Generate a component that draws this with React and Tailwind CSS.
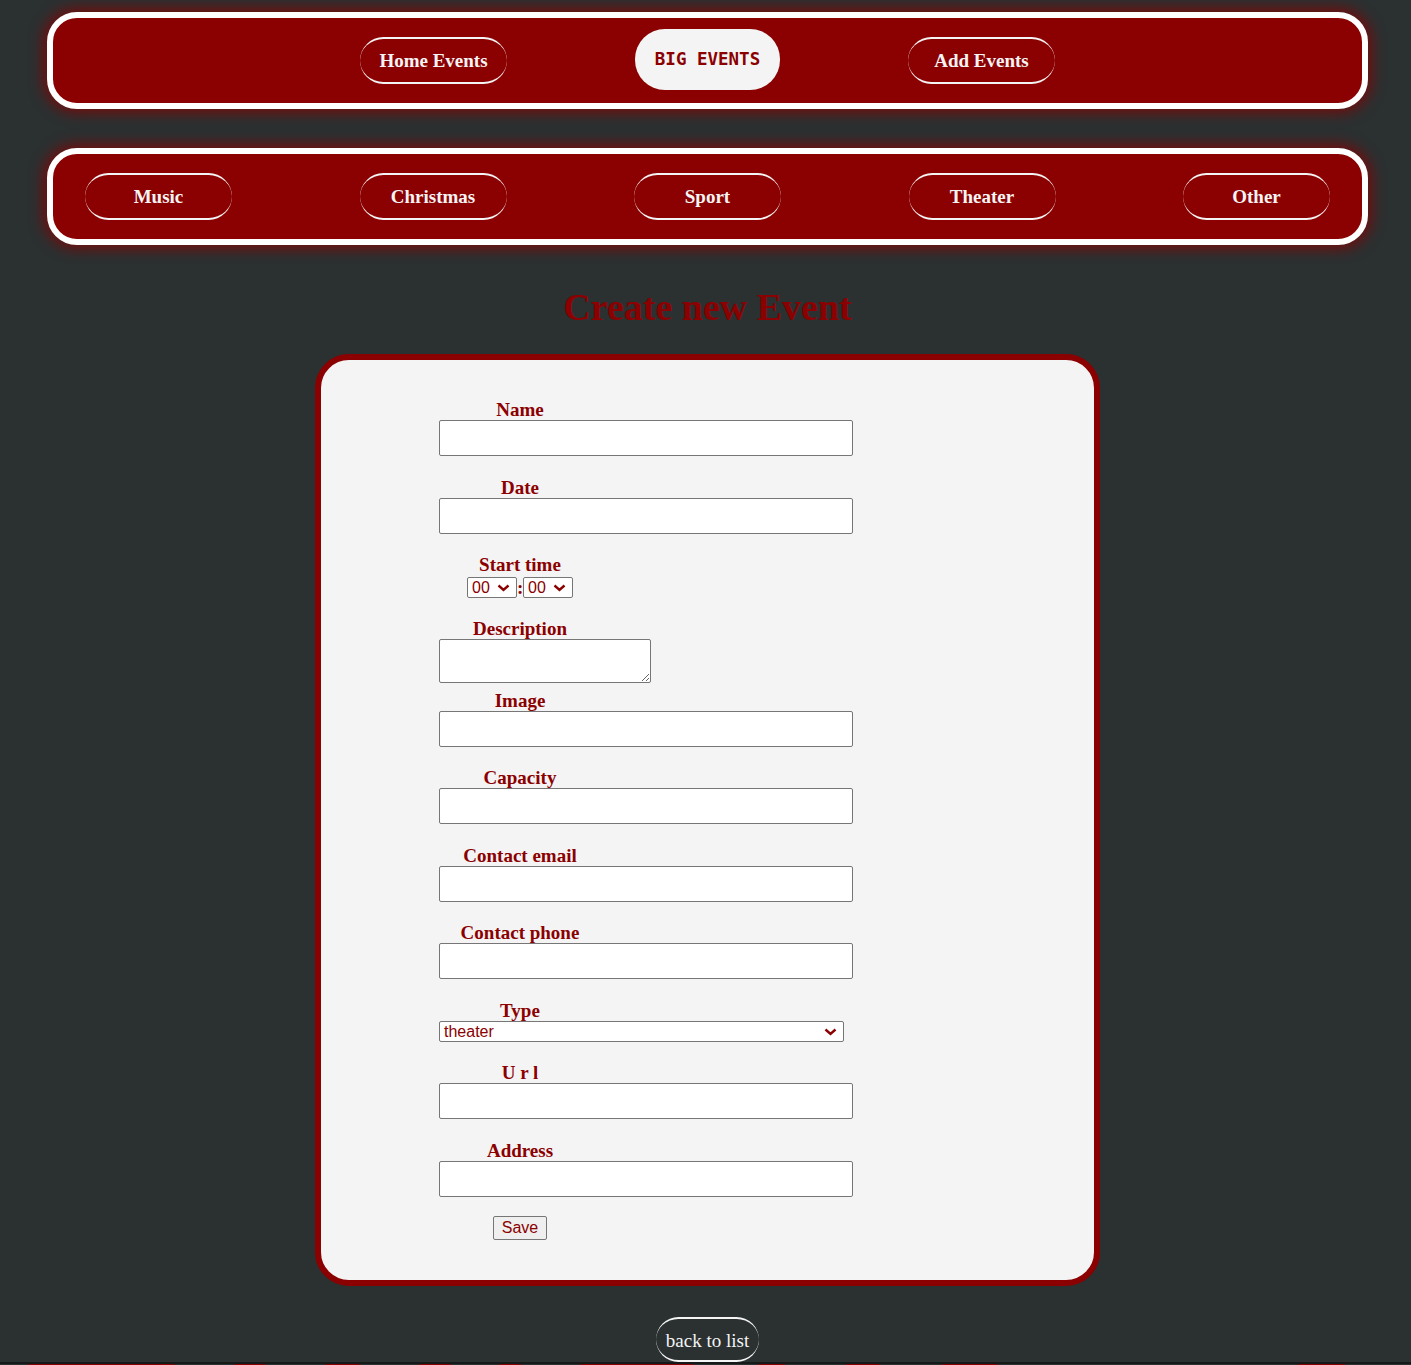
import React from "react";

const serif = { fontFamily: '"Liberation Serif", "Times New Roman", serif' };

function Chevron() {
  return (
    <svg width="13" height="8" viewBox="0 0 13 8" className="pointer-events-none absolute right-[7px] top-1/2 -translate-y-1/2">
      <polyline points="1.5,1.5 6.5,6 11.5,1.5" fill="none" stroke="#8b0000" strokeWidth="2.4" />
    </svg>
  );
}

function Pill({ children, w = "w-[147px]" }) {
  return (
    <a
      href="#"
      className={`${w} h-[47px] flex items-center justify-center pt-[2px] rounded-full border-y-2 border-x-0 border-[#f4f4f4] text-[#f4f4f4] text-[19px] font-bold`}
      style={serif}
    >
      {children}
    </a>
  );
}

function Label({ children, className = "" }) {
  return (
    <div className={`w-[162px] text-center text-[19px] leading-[20px] h-[20px] font-bold text-[#8b0000] ${className}`} style={serif}>
      {children}
    </div>
  );
}

function TextInput() {
  return <input type="text" className="block w-[414px] h-[36px] bg-white border border-[#767676] rounded-[2px] outline-none" />;
}

const footerPills = [
  "ml-[13px] w-[177px]",
  "ml-[29px] w-[62px]",
  "ml-[29px] w-[65px]",
  "ml-[29px] w-[62px]",
  "ml-[18px] w-[52px]",
  "ml-[29px] w-[144px]",
  "ml-[34px] w-[57px]",
  "ml-[31px] w-[64px]",
  "ml-[32px] w-[86px]",
  "ml-[270px] w-[77px]",
];

export default function App() {
  return (
    <div className="min-h-screen bg-[#2b3031] overflow-hidden" style={{ fontFamily: '"Liberation Sans", Arial, sans-serif' }}>
      <div className="ml-[47px] mr-[43px] pt-[12px]">
        {/* Top nav */}
        <nav className="h-[97px] border-[6px] border-white rounded-[30px] bg-[#8b0000] shadow-[0_0_14px_4px_rgba(139,0,0,0.75)] flex items-center justify-between px-[32px]">
          <div className="w-[147px]" />
          <Pill>Home Events</Pill>
          <div
            className="w-[145px] h-[61px] -mt-[2px] rounded-[30px] bg-[#f4f4f4] flex items-center justify-center text-[#8b0000] text-[17.5px] font-bold"
            style={{ fontFamily: '"DejaVu Sans Mono", "Liberation Mono", monospace' }}
          >
            BIG EVENTS
          </div>
          <Pill>Add Events</Pill>
          <div className="w-[147px]" />
        </nav>

        {/* Category nav */}
        <nav className="mt-[39px] h-[97px] border-[6px] border-white rounded-[30px] bg-[#8b0000] shadow-[0_0_14px_4px_rgba(139,0,0,0.75)] flex items-center justify-between px-[32px]">
          <Pill>Music</Pill>
          <Pill>Christmas</Pill>
          <Pill>Sport</Pill>
          <Pill>Theater</Pill>
          <Pill>Other</Pill>
        </nav>

        <h1 className="mt-[40px] text-center text-[38px] leading-[44px] font-bold text-[#8b0000]" style={serif}>
          Create new Event
        </h1>

        {/* Form card */}
        <div className="mx-auto mt-[25px] w-[785px] border-[6px] border-[#8b0000] rounded-[34px] bg-[#f4f4f4] pt-[40px] pb-[40px] pl-[118px]">
          <form className="flex flex-col items-start" onSubmit={(e) => e.preventDefault()}>
            <Label>Name</Label>
            <TextInput />

            <Label className="mt-[22px]">Date</Label>
            <TextInput />

            <Label className="mt-[21px]">Start time</Label>
            <div className="mt-[2px] w-[162px] flex justify-center items-center">
              <div className="relative">
                <select className="appearance-none block w-[50px] h-[21px] bg-white border border-[#767676] rounded-[2px] pl-[4px] text-[16px] leading-[19px] text-[#8b0000] outline-none">
                  <option>00</option>
                </select>
                <Chevron />
              </div>
              <span className="text-[19px] font-bold text-[#8b0000] w-[6px] text-center leading-[20px]" style={serif}>:</span>
              <div className="relative">
                <select className="appearance-none block w-[50px] h-[21px] bg-white border border-[#767676] rounded-[2px] pl-[4px] text-[16px] leading-[19px] text-[#8b0000] outline-none">
                  <option>00</option>
                </select>
                <Chevron />
              </div>
            </div>

            <Label className="mt-[21px]">Description</Label>
            <textarea className="block w-[212px] h-[44px] bg-white border border-[#767676] rounded-[2px] outline-none" />

            <Label className="mt-[8px]">Image</Label>
            <TextInput />

            <Label className="mt-[21px]">Capacity</Label>
            <TextInput />

            <Label className="mt-[22px]">Contact email</Label>
            <TextInput />

            <Label className="mt-[21px]">Contact phone</Label>
            <TextInput />

            <Label className="mt-[22px]">Type</Label>
            <div className="relative">
              <select
                defaultValue="theater"
                className="appearance-none block w-[405px] h-[21px] bg-white border border-[#767676] rounded-[2px] pl-[4px] text-[16px] leading-[19px] text-[#8b0000] outline-none"
              >
                <option value="music">music</option>
                <option value="christmas">christmas</option>
                <option value="sport">sport</option>
                <option value="theater">theater</option>
                <option value="other">other</option>
              </select>
              <Chevron />
            </div>

            <Label className="mt-[21px]">U r l</Label>
            <TextInput />

            <Label className="mt-[22px]">Address</Label>
            <TextInput />

            <div className="mt-[19px] w-[162px] flex justify-center">
              <button
                type="submit"
                className="w-[54px] h-[24px] bg-[#efefef] border border-[#767676] rounded-[2px] text-[16px] leading-[18px] text-[#8b0000]"
              >
                Save
              </button>
            </div>
          </form>
        </div>

        <div className="mt-[31px] flex justify-center">
          <a
            href="#"
            className="w-[103px] h-[45px] flex items-center justify-center pt-[3px] rounded-full border-y-2 border-x-0 border-[#f4f4f4] text-[#f4f4f4] text-[19px]"
            style={serif}
          >
            back to list
          </a>
        </div>
      </div>

      <footer className="border-t-[2px] border-[#15191a] bg-[#2b3031] h-[60px] flex items-start">
        {footerPills.map((c, i) => (
          <div key={i} className={`${c} h-[40px] rounded-full border-[3px] border-[#8b0000]`} />
        ))}
      </footer>
    </div>
  );
}
